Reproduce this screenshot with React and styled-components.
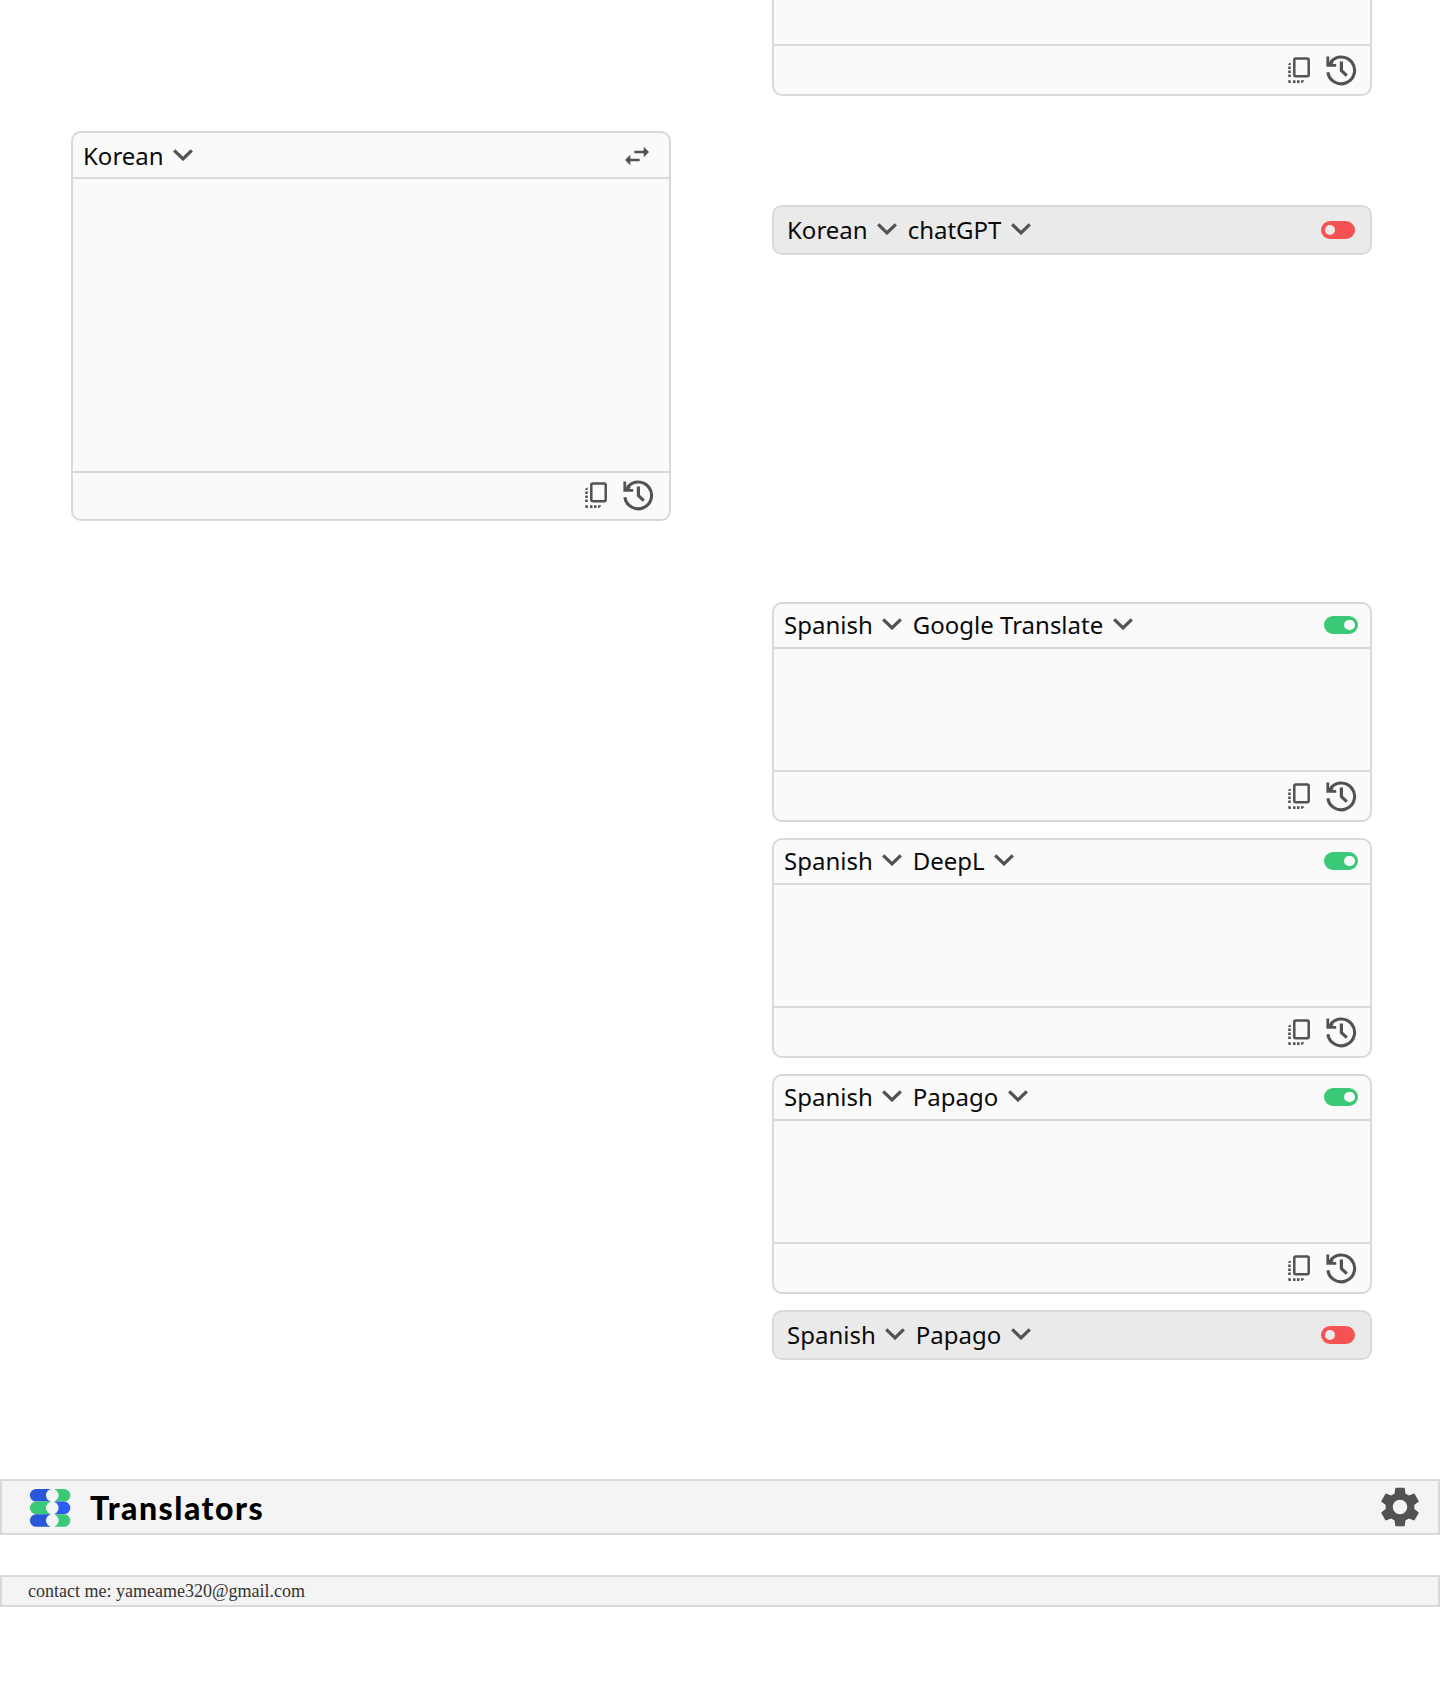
import React from 'react';
import styled, { createGlobalStyle } from 'styled-components';
import { MdSettings } from 'react-icons/md';

const LINE = '#d9d9d9';
const ICON = '#525252';

const GlobalStyle = createGlobalStyle`
  *, *::before, *::after { box-sizing: border-box; }
  body { margin: 0; background: #fff; color: #0a0a0a; font-family: 'Noto Sans', sans-serif; }
  svg { display: block; flex: none; }
`;

const Page = styled.div`
  display: flex;
  flex-direction: column;
  min-height: 1691px;
`;

const Columns = styled.main`
  display: grid;
  grid-template-columns: 600px 600px;
  column-gap: 101px;
  align-items: start;
  height: 1479px;
  padding-left: 71px;
`;

const Column = styled.div`
  display: flex;
  flex-direction: column;
  padding-top: ${(p) => p.$top || 0}px;
`;

const Group = styled.section`
  display: flex;
  flex-direction: column;
  gap: 16px;
  margin-top: ${(p) => p.$top}px;
`;

const Card = styled.article`
  display: flex;
  flex-direction: column;
  height: ${(p) => p.$height}px;
  background: #fafafa;
  border: 2px solid ${LINE};
  border-radius: 10px;
  ${(p) => p.$open && 'border-top: 0; border-radius: 0 0 10px 10px;'}
`;

const CardHeader = styled.header`
  display: flex;
  align-items: center;
  height: 45px;
  padding: 0 12px 1px 10px;
  border-bottom: 2px solid ${LINE};
`;

const SourceHeader = styled(CardHeader)`
  height: 46px;
  padding: 2px 16px 0 10px;
`;

const CardBody = styled.div`
  flex: 1;
`;

const CardFooter = styled.footer`
  display: flex;
  justify-content: flex-end;
  align-items: flex-start;
  gap: 16.5px;
  height: 50px;
  padding: 8.5px 13px 0 0;
  border-top: 2px solid ${LINE};
`;

const SourceFooter = styled(CardFooter)`
  height: 48px;
  padding: 7.4px 15px 0 0;
`;

const DisabledCard = styled.article`
  display: flex;
  align-items: center;
  height: 50px;
  padding: 0 15px 0 13px;
  background: #eaeaea;
  border: 2px solid ${LINE};
  border-radius: 10px;
`;

const Select = styled.button`
  display: flex;
  align-items: center;
  gap: 9.5px;
  margin: 0 10.5px 0 0;
  padding: 0;
  border: 0;
  background: none;
  color: #0a0a0a;
  font: 400 24px/32px 'Noto Sans', sans-serif;
  white-space: nowrap;

  svg { margin-bottom: 1.5px; }
`;

const Spacer = styled.div`
  flex: 1;
`;

const Switch = styled.span`
  display: flex;
  align-items: center;
  justify-content: ${(p) => (p.$on ? 'flex-end' : 'flex-start')};
  width: 34px;
  height: 18px;
  padding: 0 3.5px;
  border-radius: 9px;
  background: ${(p) => (p.$on ? '#3ac977' : '#f55353')};
`;

const Knob = styled.span`
  width: 10.5px;
  height: 10.5px;
  border-radius: 50%;
  background: ${(p) => (p.$on ? '#fafafa' : '#eaeaea')};
`;

const Bar = styled.div`
  display: flex;
  align-items: center;
  height: ${(p) => p.$height}px;
  background: #f4f4f4;
  border: 2px solid ${LINE};
`;

const TopBar = styled(Bar)`
  padding: 0 14px 0 27px;
`;

const ContactBar = styled(Bar)`
  margin-top: 40px;
  padding-left: 26px;
`;

const Title = styled.h1`
  margin: 1px 0 0 19px;
  color: #000;
  font: 900 32px/40px Lato, sans-serif;
  letter-spacing: 1.5px;
`;

const Contact = styled.p`
  margin: 0;
  color: #333;
  font: 400 18px/24px 'Liberation Serif', serif;
`;

const LogoMark = styled.svg`
  margin-top: 2px;
`;

const Chevron = () => (
  <svg width="20" height="12" viewBox="0 0 20 12">
    <path d="M1.2 1.3 10 9.9l8.8-8.6" fill="none" stroke={ICON} strokeWidth="3.2" />
  </svg>
);

const SwapIcon = () => (
  <svg width="32" height="32" viewBox="0 0 24 24" fill={ICON}>
    <path d="M6.99 11 3 15l3.99 4v-3H14v-2H6.99v-3zM21 9l-3.99-4v3H10v2h7.01v3L21 9z" />
  </svg>
);

const CopyIcon = () => (
  <svg width="22" height="30" viewBox="0 0 22 30">
    <rect x="6.3" y="3.4" width="14.4" height="17.8" rx="1.4" fill="none" stroke={ICON} strokeWidth="2.5" />
    <g fill={ICON}>
      <path d="M.2 9.8Q.4 8 2.7 7.6V10H.2zM.2 11.6h2.6V14H.2zM.2 15.6h2.6V18H.2zM.2 19.6h2.6V22H.2zM.2 25.3v1.4q0 1.4 1.3 1.4h1.3v-2.8zM5 25.3h2.5v2.8H5zM9 25.3h2.5v2.8H9zM13 25.3h3.2q-.4 2.5-3.2 2.8z" />
    </g>
  </svg>
);

const HistoryIcon = () => (
  <svg width="31" height="31" viewBox="0 0 31 31" fill="none" stroke={ICON}>
    <path d="M1.9 17.2A13.4 13.4 0 1 0 4.6 7.2" strokeWidth="3.1" />
    <path d="M15.4 6.5v9.1l5.4 5" strokeWidth="3.2" />
    <path d="M.4 1.6h2.8v5.6L5.6 5l2.2 2-1.3 2h3.7v2.8H.4z" fill={ICON} stroke="none" />
  </svg>
);

const Logo = () => {
  const rows = [
    ['#2957d9', '#3ac977'],
    ['#3ac977', '#2b5cf5'],
    ['#2957d9', '#3ac977'],
  ];
  return (
    <LogoMark width="42" height="38" viewBox="0 0 42 38">
      {rows.map(([left, right], i) => (
        <g key={i} transform={`translate(0 ${i * 12.6})`}>
          <path d="M7.2 0H22v12.6H7.2a6.3 6.3 0 0 1 0-12.6z" fill={left} />
          <path d="M25 0h10a6.3 6.3 0 0 1 0 12.6H25z" fill={right} />
          <path d="M21.5 0H26v12.6h-4.5z" fill="#f4f4f4" />
          <circle cx="23.3" cy="6.3" r="6.3" fill="#f4f4f4" />
        </g>
      ))}
    </LogoMark>
  );
};

const Toggle = ({ on }) => (
  <Switch $on={on} role="switch" aria-checked={on}>
    <Knob $on={on} />
  </Switch>
);

const Picker = ({ children }) => (
  <Select>
    {children}
    <Chevron />
  </Select>
);

const Actions = ({ as: Footer = CardFooter }) => (
  <Footer>
    <CopyIcon />
    <HistoryIcon />
  </Footer>
);

const Translation = ({ language, engine }) => (
  <Card $height={220}>
    <CardHeader>
      <Picker>{language}</Picker>
      <Picker>{engine}</Picker>
      <Spacer />
      <Toggle on />
    </CardHeader>
    <CardBody />
    <Actions />
  </Card>
);

const DisabledTranslation = ({ language, engine }) => (
  <DisabledCard>
    <Picker>{language}</Picker>
    <Picker>{engine}</Picker>
    <Spacer />
    <Toggle on={false} />
  </DisabledCard>
);

export default function App() {
  return (
    <>
      <GlobalStyle />
      <Page>
        <Columns>
          <Column $top={131}>
            <Card $height={390}>
              <SourceHeader>
                <Picker>Korean</Picker>
                <Spacer />
                <SwapIcon />
              </SourceHeader>
              <CardBody />
              <Actions as={SourceFooter} />
            </Card>
          </Column>
          <Column>
            <Card $height={96} $open>
              <CardBody />
              <Actions />
            </Card>
            <Group $top={109}>
              <DisabledTranslation language="Korean" engine="chatGPT" />
            </Group>
            <Group $top={347}>
              <Translation language="Spanish" engine="Google Translate" />
              <Translation language="Spanish" engine="DeepL" />
              <Translation language="Spanish" engine="Papago" />
              <DisabledTranslation language="Spanish" engine="Papago" />
            </Group>
          </Column>
        </Columns>
        <TopBar $height={56}>
          <Logo />
          <Title>Translators</Title>
          <Spacer />
          <MdSettings size={48} color={ICON} />
        </TopBar>
        <ContactBar $height={32}>
          <Contact>contact me: yameame320@gmail.com</Contact>
        </ContactBar>
      </Page>
    </>
  );
}
